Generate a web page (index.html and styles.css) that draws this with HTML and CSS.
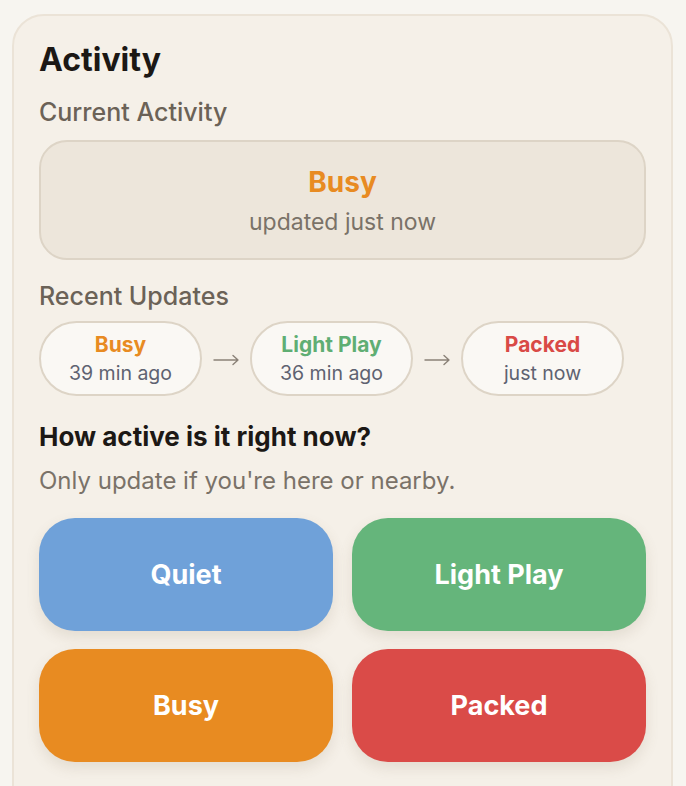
FILE: index.html
```html
<!DOCTYPE html>
<html>
<head>
<meta charset="utf-8">
<link rel="stylesheet" href="styles.css">
</head>
<body>
<div class="card">
  <h1 class="title">Activity</h1>
  <h2 class="label">Current Activity</h2>
  <div class="current">
    <div class="current-status busy">Busy</div>
    <div class="current-time">updated just now</div>
  </div>
  <h2 class="label label-recent">Recent Updates</h2>
  <div class="timeline">
    <div class="pill">
      <div class="pill-status busy">Busy</div>
      <div class="pill-time">39 min ago</div>
    </div>
    <svg class="arrow" width="26" height="12" viewBox="0 0 26 12"><path d="M1 6H25M20 1.5L25 6L20 10.5" fill="none" stroke="#8a8177" stroke-width="1.4" stroke-linecap="round" stroke-linejoin="round"/></svg>
    <div class="pill">
      <div class="pill-status light">Light Play</div>
      <div class="pill-time">36 min ago</div>
    </div>
    <svg class="arrow" width="26" height="12" viewBox="0 0 26 12"><path d="M1 6H25M20 1.5L25 6L20 10.5" fill="none" stroke="#8a8177" stroke-width="1.4" stroke-linecap="round" stroke-linejoin="round"/></svg>
    <div class="pill">
      <div class="pill-status packed">Packed</div>
      <div class="pill-time">just now</div>
    </div>
  </div>
  <h3 class="question">How active is it right now?</h3>
  <p class="hint">Only update if you're here or nearby.</p>
  <div class="buttons">
    <button class="btn btn-quiet">Quiet</button>
    <button class="btn btn-light">Light Play</button>
    <button class="btn btn-busy">Busy</button>
    <button class="btn btn-packed">Packed</button>
  </div>
</div>
</body>
</html>
```

FILE: styles.css
```css
* { box-sizing: border-box; }
html, body { margin: 0; padding: 0; }
body {
  background: #f7f5f0;
  font-family: Inter, "Liberation Sans", sans-serif;
  padding: 14px 13px 0 12px;
  height: 786px;
  overflow: hidden;
}
.card {
  background: #f5f0e8;
  border: 2px solid #ebe3d7;
  border-radius: 32px;
  padding: 25px 25px 60px 25px;
}
.title {
  margin: 0;
  font-size: 32px;
  line-height: 38px;
  font-weight: 700;
  color: #1c1815;
}
.label {
  margin: 18px 0 0 0;
  font-size: 25px;
  line-height: 30px;
  font-weight: 500;
  color: #6b6257;
}
.current {
  margin-top: 13px;
  height: 120px;
  border: 2px solid #ddd4c6;
  border-radius: 28px;
  background: #ede6db;
  display: flex;
  flex-direction: column;
  align-items: center;
  justify-content: center;
  gap: 9px;
}
.current-status {
  font-size: 28px;
  line-height: 34px;
  font-weight: 700;
}
.current-time {
  font-size: 23px;
  line-height: 28px;
  color: #7a7268;
}
.busy { color: #e88b22; }
.light { color: #5fae73; }
.packed { color: #d94a46; }
.label-recent { margin-top: 21px; }
.timeline {
  margin-top: 10px;
  display: flex;
  align-items: center;
  gap: 11px;
}
.pill {
  width: 163px;
  height: 75px;
  border: 2px solid #ddd4c6;
  border-radius: 38px;
  background: #faf8f4;
  display: flex;
  flex-direction: column;
  align-items: center;
  justify-content: center;
  gap: 4px;
}
.pill-status {
  font-size: 21px;
  line-height: 25px;
  font-weight: 700;
}
.pill-time {
  font-size: 19.5px;
  line-height: 24px;
  color: #5e6271;
}
.arrow {
  flex: none;
  margin-top: 3px;
}
.question {
  margin: 25px 0 0 0;
  font-size: 26px;
  line-height: 32px;
  font-weight: 700;
  color: #1c1815;
}
.hint {
  margin: 13px 0 0 0;
  font-size: 24px;
  line-height: 30px;
  color: #7a7268;
}
.buttons {
  margin-top: 22px;
  display: grid;
  grid-template-columns: 1fr 1fr;
  gap: 18px 19px;
}
.btn {
  height: 113px;
  border: none;
  border-radius: 36px;
  font-family: inherit;
  font-size: 27px;
  font-weight: 700;
  color: #ffffff;
  box-shadow: 0 6px 14px rgba(120, 100, 70, 0.14);
}
.btn-quiet { background: #6fa1d9; }
.btn-light { background: #65b57b; }
.btn-busy { background: #e88b21; }
.btn-packed { background: #da4b48; }
```
